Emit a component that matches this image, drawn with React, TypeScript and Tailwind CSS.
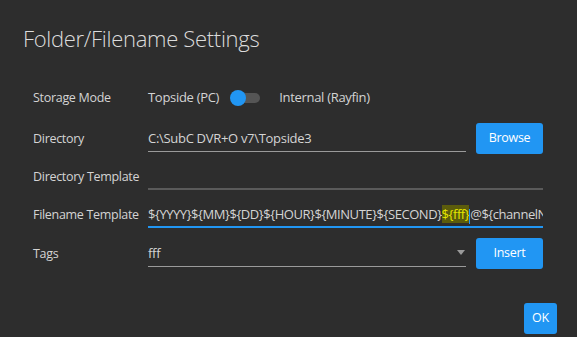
import React from "react";

export default function App() {
  const font = { fontFamily: '"Open Sans", "Noto Sans", sans-serif' };
  const label = "w-[115px] shrink-0 text-[12.5px]";
  return (
    <div className="w-[577px] h-[337px] bg-[#2d2d2d] text-[#d4d4d4] overflow-hidden relative" style={font}>
      <div className="pl-[23px] pt-[23px] text-[22px] leading-[30px] font-light text-[#dcdcdc] tracking-[-0.3px]">
        Folder/Filename Settings
      </div>
      <div className="pl-[33px] pr-[34px] mt-[31px] flex flex-col text-[13px] tracking-[-0.3px]">
        {/* Storage Mode */}
        <div className="flex items-center h-[28px]">
          <div className={label}>Storage Mode</div>
          <div className="flex items-center">
            <span>Topside (PC)</span>
            <div className="relative ml-[11px] w-[30px] h-[16px] flex items-center">
              <div className="absolute left-[8px] right-0 h-[10px] rounded-full bg-[#555555]" />
              <div className="absolute left-0 w-[16px] h-[16px] rounded-full bg-[#2196f3]" />
            </div>
            <span className="ml-[19px]">Internal (Rayfin)</span>
          </div>
        </div>
        {/* Directory */}
        <div className="flex items-center mt-[12px] h-[28px]">
          <div className={`${label} pt-[2px]`}>Directory</div>
          <div className="flex-1 min-w-0 h-full flex items-center pt-[2px] border-b border-[#9a9a9a]">C:\SubC DVR+O v7\Topside3</div>
          <button className="ml-[10px] w-[67px] h-[31px] shrink-0 rounded-[3px] bg-[#2196f3] text-white text-[12.5px]">Browse</button>
        </div>
        {/* Directory Template */}
        <div className="flex items-center mt-[10px] h-[28px]">
          <div className={`${label} pt-[3px]`}>Directory Template</div>
          <div className="flex-1 min-w-0 h-full border-b-2 border-[#5a5a5a]" />
        </div>
        {/* Filename Template */}
        <div className="flex items-center mt-[10px] h-[28px]">
          <div className={`${label} pt-[3px]`}>Filename Template</div>
          <div className="w-[395px] h-full flex items-center pt-[3px] border-b-2 border-[#2196f3]">
            <div className="w-[395px] overflow-hidden whitespace-nowrap tracking-[-0.45px] leading-[18px]">
              <span>{"${YYYY}${MM}${DD}${HOUR}${MINUTE}${SECOND}"}</span>
              <span className="bg-[#5c5c0c] text-[#e6e600]">{"${fff}"}</span>
              <span className="inline-block align-middle w-px h-[15px] bg-[#2196f3]" />
              <span>{"@${channelName}"}</span>
            </div>
          </div>
        </div>
        {/* Tags */}
        <div className="flex items-center mt-[11px] h-[28px]">
          <div className={`${label} pt-[2px]`}>Tags</div>
          <div className="flex-1 min-w-0 h-full flex items-center justify-between pt-[2px] border-b border-[#9a9a9a]">
            <span>fff</span>
            <svg width="8" height="5" viewBox="0 0 8 5" className="mr-[1px] mb-[2px]"><path d="M0 0 L8 0 L4 5 Z" fill="#9a9a9a" /></svg>
          </div>
          <button className="ml-[10px] w-[67px] h-[31px] shrink-0 rounded-[3px] bg-[#2196f3] text-white text-[12.5px]">Insert</button>
        </div>
        <div className="flex justify-end mt-[36px] mr-[-14px]">
          <button className="w-[33px] h-[31px] rounded-[3px] bg-[#2196f3] text-white text-[12.5px]">OK</button>
        </div>
      </div>
    </div>
  );
}
